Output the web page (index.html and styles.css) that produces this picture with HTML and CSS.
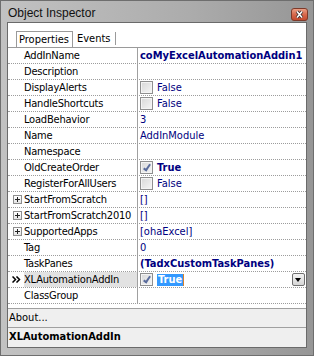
FILE: index.html
```html
<!DOCTYPE html>
<html lang="en">
<head>
    <meta charset="UTF-8">
    <title>Object Inspector</title>
    <link rel="stylesheet" href="styles.css">
</head>
<body>
    <div class="window">
        <div class="titlebar">
            <span class="title">Object Inspector</span>
            <span class="close">
                <svg width="17" height="13" viewBox="0 0 17 13">
                    <defs>
                        <linearGradient id="cg" x1="0" y1="0" x2="0" y2="1">
                            <stop offset="0" stop-color="#eba58c"/>
                            <stop offset="0.5" stop-color="#d8694c"/>
                            <stop offset="1" stop-color="#c2472b"/>
                        </linearGradient>
                    </defs>
                    <rect x="0.5" y="0.5" width="16" height="12" rx="2.5" fill="url(#cg)" stroke="#7d3a2a"/>
                    <path d="M6 3.5 L11 9.5 M11 3.5 L6 9.5" stroke="#3a2a2a" stroke-width="3.2"/>
                    <path d="M6 3.5 L11 9.5 M11 3.5 L6 9.5" stroke="#fff" stroke-width="1.6"/>
                </svg>
            </span>
        </div>
        <div class="client">
            <div class="tabs">
                <span class="tab active">Properties</span>
                <span class="tab">Events</span>
            </div>
            <div class="grid">
                <div class="row"><span class="gutter"></span><span class="name">AddInName</span><span class="value bold">coMyExcelAutomationAddin1</span></div>
                <div class="row"><span class="gutter"></span><span class="name">Description</span><span class="value"></span></div>
                <div class="row"><span class="gutter"></span><span class="name">DisplayAlerts</span><span class="value"><span class="check"></span>False</span></div>
                <div class="row"><span class="gutter"></span><span class="name">HandleShortcuts</span><span class="value"><span class="check"></span>False</span></div>
                <div class="row"><span class="gutter"></span><span class="name">LoadBehavior</span><span class="value">3</span></div>
                <div class="row"><span class="gutter"></span><span class="name">Name</span><span class="value">AddInModule</span></div>
                <div class="row"><span class="gutter"></span><span class="name">Namespace</span><span class="value"></span></div>
                <div class="row"><span class="gutter"></span><span class="name">OldCreateOrder</span><span class="value bold"><span class="check checked"></span>True</span></div>
                <div class="row"><span class="gutter"></span><span class="name">RegisterForAllUsers</span><span class="value"><span class="check"></span>False</span></div>
                <div class="row"><span class="gutter"><span class="plus"></span></span><span class="name">StartFromScratch</span><span class="value">[]</span></div>
                <div class="row"><span class="gutter"><span class="plus"></span></span><span class="name">StartFromScratch2010</span><span class="value">[]</span></div>
                <div class="row"><span class="gutter"><span class="plus"></span></span><span class="name">SupportedApps</span><span class="value">[ohaExcel]</span></div>
                <div class="row"><span class="gutter"></span><span class="name">Tag</span><span class="value">0</span></div>
                <div class="row"><span class="gutter"></span><span class="name">TaskPanes</span><span class="value bold">(TadxCustomTaskPanes)</span></div>
                <div class="row selected">
                    <span class="gutter">
                        <svg width="9" height="7" viewBox="0 0 9 7"><path d="M0.5 0.5 L3.5 3.5 L0.5 6.5 M4.5 0.5 L7.5 3.5 L4.5 6.5" fill="none" stroke="#000" stroke-width="1.5"/></svg>
                    </span>
                    <span class="name">XLAutomationAddIn</span>
                    <span class="value bold"><span class="check checked"></span><span class="edit">True</span><span class="drop"></span></span>
                </div>
                <div class="row"><span class="gutter"></span><span class="name">ClassGroup</span><span class="value"></span></div>
            </div>
            <div class="about">About...</div>
            <div class="status">XLAutomationAddIn</div>
        </div>
    </div>
</body>
</html>
```
FILE: styles.css
```css
body {
    margin: 0;
    font-family: "DejaVu Sans Condensed", "DejaVu Sans", sans-serif;
    font-size: 11px;
}
.window {
    width: 314px;
    height: 356px;
    box-sizing: border-box;
    border: 1px solid #6e6e6e;
    background: linear-gradient(to right, #c2c2c2, #acacac 60%, #969696);
    padding: 0 6px 7px;
    display: flex;
    flex-direction: column;
}
.titlebar {
    height: 21px;
    display: flex;
    align-items: center;
    padding: 0 1px;
}
.title {
    font-family: "Liberation Sans", Arial, sans-serif;
    font-size: 12px;
    color: #111;
    margin-top: 3px;
}
.close {
    margin-left: auto;
    margin-top: 5px;
    margin-right: -2px;
    height: 13px;
}
.client {
    flex: 1;
    background: #fff;
    border: 1px solid #6a6a6a;
    display: flex;
    flex-direction: column;
}
/* tabs */
.tabs {
    height: 25px;
    box-sizing: border-box;
    border-bottom: 1px solid #9a9a9a;
    display: flex;
    align-items: flex-end;
    padding-left: 8px;
}
.tab {
    height: 16px;
    line-height: 15px;
    padding: 0 3px 0 4px;
    box-sizing: border-box;
    color: #000;
}
.tab.active {
    border: 1px solid #9a9a9a;
    border-bottom: none;
    box-shadow: inset 1px 1px 0 #fff;
    width: 57px;
    padding-left: 2px;
}
.tab + .tab {
    border-right: 1px solid #9a9a9a;
    height: 13px;
    line-height: 13px;
    margin-bottom: 2px;
    padding-right: 4px;
}
/* property grid */
.grid {
    display: flex;
    flex-direction: column;
}
.row {
    height: 16px;
    box-sizing: border-box;
    border-bottom: 1px dotted #9c9c9c;
    display: flex;
    line-height: 15px;
}
.gutter {
    width: 16px;
    flex: none;
    display: flex;
    align-items: center;
    justify-content: center;
}
.name {
    width: 114px;
    flex: none;
    box-sizing: border-box;
    border-right: 1px solid #a0a0a0;
    color: #000;
    white-space: nowrap;
    letter-spacing: -0.2px;
}
.selected .name {
    background: #e2e2e2;
}
.value {
    flex: 1;
    display: flex;
    align-items: center;
    padding-left: 2px;
    color: #000080;
    white-space: nowrap;
}
.bold {
    font-weight: bold;
}
.plus {
    width: 9px;
    height: 9px;
    box-sizing: border-box;
    border: 1px solid #8e8e8e;
    background: linear-gradient(#fff, #e4e4e4);
    position: relative;
    margin-left: 3px;
}
.plus::before {
    content: "";
    position: absolute;
    left: 1px;
    top: 3px;
    width: 5px;
    height: 1px;
    background: #222;
}
.plus::after {
    content: "";
    position: absolute;
    left: 3px;
    top: 1px;
    width: 1px;
    height: 5px;
    background: #222;
}
.check {
    width: 13px;
    height: 13px;
    box-sizing: border-box;
    border: 1px solid #8f8f8f;
    background: linear-gradient(135deg, #d8d8d8, #f6f6f6);
    box-shadow: inset 0 0 0 1px #f4f4f4;
    margin-right: 4px;
    flex: none;
    position: relative;
}
.check.checked::after {
    content: "";
    position: absolute;
    left: 4px;
    top: 1px;
    width: 2px;
    height: 6px;
    border: solid #5a6c9c;
    border-width: 0 2px 2px 0;
    transform: rotate(35deg);
}
.edit {
    background: #3399ff;
    color: #fff;
    padding: 0 1px;
    line-height: 12px;
    border-right: 1px solid #d9822b;
}
.drop {
    margin-left: auto;
    width: 13px;
    height: 13px;
    box-sizing: border-box;
    border: 1px solid #707070;
    border-radius: 2px;
    background: linear-gradient(#f4f4f4, #d6d6d6);
    position: relative;
    margin-right: 1px;
}
.drop::after {
    content: "";
    position: absolute;
    left: 2px;
    top: 4px;
    border-left: 3.5px solid transparent;
    border-right: 3.5px solid transparent;
    border-top: 4px solid #000;
}
/* bottom panels */
.about {
    margin-top: 4px;
    height: 20px;
    box-sizing: border-box;
    border-top: 1px solid #a0a0a0;
    border-bottom: 1px solid #a0a0a0;
    background: #efefef;
    padding-left: 1px;
    line-height: 18px;
    color: #000;
}
.status {
    flex: 1;
    background: #efefef;
    padding-left: 1px;
    line-height: 17px;
    font-weight: bold;
    color: #000;
}
```
